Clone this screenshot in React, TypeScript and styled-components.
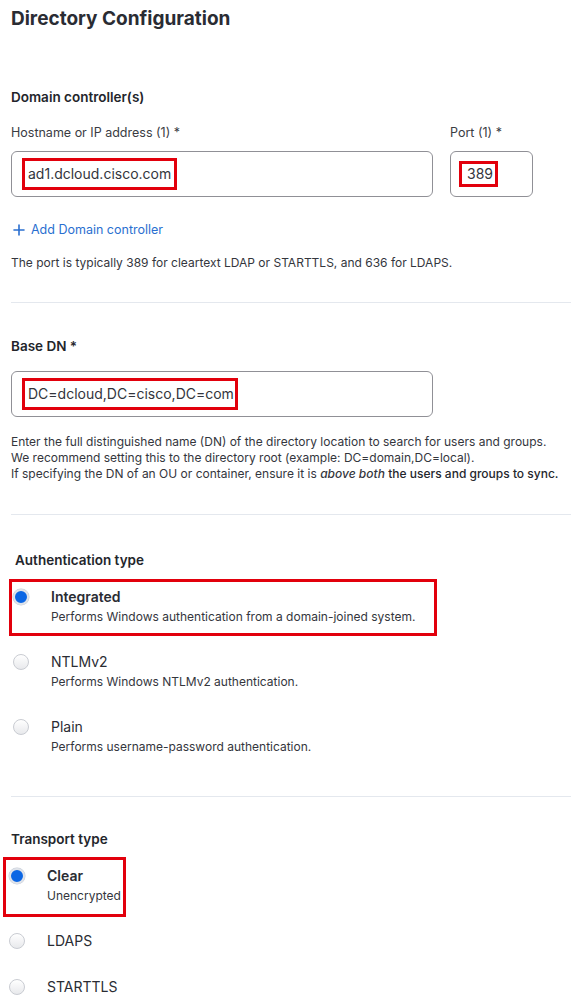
import styled, { createGlobalStyle, css } from 'styled-components';

const GlobalStyle = createGlobalStyle`
  html, body {
    margin: 0;
    padding: 0;
    background: #ffffff;
  }
  body {
    font-family: Inter, "Noto Sans", "Liberation Sans", sans-serif;
    color: #2c2e35;
    -webkit-font-smoothing: antialiased;
  }
`;

const Page = styled.div`
  width: 571px;
  height: 1005px;
  overflow: hidden;
  padding-left: 11px;
  box-sizing: border-box;
`;

const Title = styled.h1`
  margin: 7px 0 0;
  font-size: 19px;
  line-height: 24px;
  font-weight: 700;
  color: #2a2c33;
`;

const Section = styled.section<{ $indent?: number; $top: number }>`
  padding-left: ${p => p.$indent ?? 0}px;
  margin-top: ${p => p.$top}px;
`;

const SectionTitle = styled.h2<{ $indent?: number }>`
  margin: 0;
  padding-left: ${p => p.$indent ?? 0}px;
  font-size: 13.5px;
  line-height: 18px;
  font-weight: 600;
  color: #23252b;
`;

const Divider = styled.hr<{ $top: number }>`
  margin: ${p => p.$top}px 0 0;
  border: 0;
  height: 1px;
  background: #e4e8ee;
`;

const FieldRow = styled.div`
  display: flex;
  gap: 17px;
  margin-top: 19px;
`;

const Field = styled.div<{ $width: number }>`
  display: flex;
  flex-direction: column;
  width: ${p => p.$width}px;
`;

const Label = styled.label`
  font-size: 12.5px;
  line-height: 16px;
  color: #3a3c43;
  margin-bottom: 10px;
`;

const InputBox = styled.div<{ $width?: number; $top?: number }>`
  box-sizing: border-box;
  height: 46px;
  ${p => p.$width && css`width: ${p.$width}px;`}
  margin-top: ${p => p.$top ?? 0}px;
  border: 1px solid #909096;
  border-radius: 6px;
  padding: 0 0 0 16px;
  display: flex;
  align-items: center;
  font-size: 14px;
  color: #33353c;
`;

/* red annotation rectangle drawn over a value */
const Marked = styled.span<{ $t: number; $r: number; $b: number; $l: number }>`
  position: relative;
  display: inline-block;
  line-height: 20px;

  &::after {
    content: '';
    position: absolute;
    top: -${p => p.$t}px;
    right: -${p => p.$r}px;
    bottom: -${p => p.$b}px;
    left: -${p => p.$l}px;
    border: 3px solid #e2000c;
    pointer-events: none;
  }
`;

const AddLink = styled.a`
  display: flex;
  align-items: center;
  gap: 6px;
  margin-top: 25px;
  margin-left: 2px;
  font-size: 12.5px;
  line-height: 16px;
  color: #2a6fd0;
  text-decoration: none;
  cursor: pointer;
`;

const Help = styled.p<{ $top: number }>`
  margin: ${p => p.$top}px 0 0;
  font-size: 12px;
  line-height: 16px;
  color: #34363d;

  em {
    font-style: italic;
    font-weight: 500;
  }
  strong {
    font-weight: 500;
    color: #25272d;
  }
`;

const OptionList = styled.div<{ $top: number; $gap: number; $shift?: number }>`
  display: flex;
  flex-direction: column;
  gap: ${p => p.$gap}px;
  margin-top: ${p => p.$top}px;
  margin-left: ${p => p.$shift ?? 0}px;
`;

const Option = styled.div<{ $mark?: [number, number, number, number] }>`
  position: relative;
  display: flex;
  align-items: flex-start;
  gap: 22px;
  align-self: flex-start;

  ${p => p.$mark && css`
    &::after {
      content: '';
      position: absolute;
      top: -${p.$mark[0]}px;
      right: -${p.$mark[1]}px;
      bottom: -${p.$mark[2]}px;
      left: -${p.$mark[3]}px;
      border: 3px solid #e2000c;
      pointer-events: none;
    }
  `}
`;

const Radio = styled.span<{ $checked?: boolean }>`
  flex: none;
  box-sizing: border-box;
  width: 16px;
  height: 16px;
  border-radius: 50%;
  margin-top: 1px;
  border: 1px solid #c9ccd2;
  background: linear-gradient(#ffffff, #e8e9ec);

  ${p => p.$checked && css`
    border: 2px solid #dfe3ea;
    background: #0b66e4;
    box-shadow: 0 0 0 0.5px #c6ccd6;
  `}
`;

const OptionText = styled.div`
  display: flex;
  flex-direction: column;
  gap: 3px;
`;

const OptionTitle = styled.span<{ $strong?: boolean }>`
  font-size: 14px;
  line-height: 18px;
  font-weight: ${p => (p.$strong ? 600 : 400)};
  color: #2a2c33;
`;

const OptionDesc = styled.span`
  font-size: 12px;
  line-height: 16px;
  color: #34363d;
`;

const PlusIcon = () => (
  <svg width="12" height="12" viewBox="0 0 12 12" fill="none">
    <path d="M6 1v10M1 6h10" stroke="#2a6fd0" strokeWidth="1.6" strokeLinecap="round" />
  </svg>
);

interface ChoiceProps {
  title: string;
  desc?: string;
  checked?: boolean;
  mark?: [number, number, number, number];
}

function Choice({ title, desc, checked, mark }: ChoiceProps) {
  return (
    <Option $mark={mark}>
      <Radio $checked={checked} />
      <OptionText>
        <OptionTitle $strong={checked}>{title}</OptionTitle>
        {desc && <OptionDesc>{desc}</OptionDesc>}
      </OptionText>
    </Option>
  );
}

export default function App() {
  return (
    <Page>
      <GlobalStyle />
      <Title>Directory Configuration</Title>

      <Section $top={57}>
        <SectionTitle>Domain controller(s)</SectionTitle>
        <FieldRow>
          <Field $width={422}>
            <Label>Hostname or IP address (1) *</Label>
            <InputBox>
              <Marked $t={6} $r={6} $b={6} $l={6}>ad1.dcloud.cisco.com</Marked>
            </InputBox>
          </Field>
          <Field $width={83}>
            <Label>Port (1) *</Label>
            <InputBox>
              <Marked $t={3} $r={5} $b={3} $l={8}>389</Marked>
            </InputBox>
          </Field>
        </FieldRow>
        <AddLink>
          <PlusIcon />
          Add Domain controller
        </AddLink>
        <Help $top={17}>The port is typically 389 for cleartext LDAP or STARTTLS, and 636 for LDAPS.</Help>
      </Section>

      <Divider $top={31} />

      <Section $top={34}>
        <SectionTitle>Base DN *</SectionTitle>
        <InputBox $width={422} $top={16}>
          <Marked $t={6} $r={4} $b={6} $l={6}>DC=dcloud,DC=cisco,DC=com</Marked>
        </InputBox>
        <Help $top={17}>
          Enter the full distinguished name (DN) of the directory location to search for users and groups.
          <br />
          We recommend setting this to the directory root (example: DC=domain,DC=local).
          <br />
          If specifying the DN of an OU or container, ensure it is <em>above both</em>{' '}
          <strong>the users and groups to sync.</strong>
        </Help>
      </Section>

      <Divider $top={32} />

      <Section $top={36} $indent={2}>
        <SectionTitle $indent={2}>Authentication type</SectionTitle>
        <OptionList $top={19} $gap={28}>
          <Choice
            title="Integrated"
            desc="Performs Windows authentication from a domain-joined system."
            checked
            mark={[9, 22, 11, 4]}
          />
          <Choice title="NTLMv2" desc="Performs Windows NTLMv2 authentication." />
          <Choice title="Plain" desc="Performs username-password authentication." />
        </OptionList>
      </Section>

      <Divider $top={41} />

      <Section $top={33}>
        <SectionTitle>Transport type</SectionTitle>
        <OptionList $top={19} $gap={28} $shift={-2}>
          <Choice title="Clear" desc="Unencrypted" checked mark={[10, 5, 13, 6]} />
          <Choice title="LDAPS" />
          <Choice title="STARTTLS" />
        </OptionList>
      </Section>
    </Page>
  );
}
